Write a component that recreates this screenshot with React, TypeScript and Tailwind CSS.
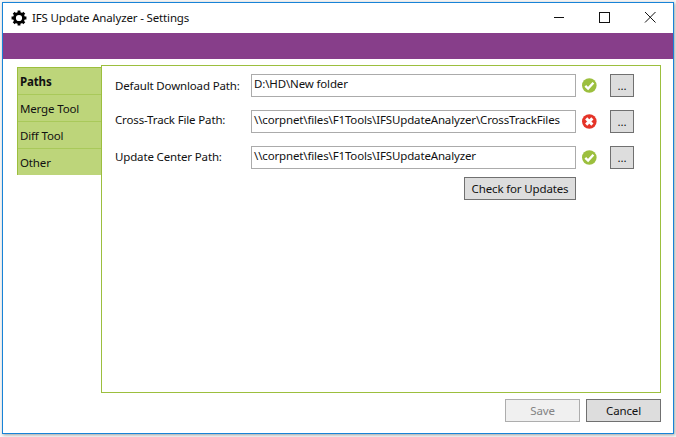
const font = "font-['Noto_Sans','Open_Sans',sans-serif] text-[11.5px] tracking-[-0.15px]";

function Gear() {
  return (
    <svg width="16" height="16" viewBox="0 0 17 17" className="shrink-0">
      <circle cx="8.5" cy="8.5" r="4.8" fill="none" stroke="#000" strokeWidth="3" />
      <path
        d="M8.5 0.6V3.8M8.5 13.2V16.4M0.6 8.5H3.8M13.2 8.5H16.4M2.9 2.9L5.2 5.2M11.8 11.8L14.1 14.1M2.9 14.1L5.2 11.8M11.8 5.2L14.1 2.9"
        stroke="#000"
        strokeWidth="3"
      />
    </svg>
  );
}

function Ok() {
  return (
    <svg width="15" height="15" viewBox="0 0 15 15">
      <circle cx="7.3" cy="7.5" r="7.3" fill="#9cbf3e" />
      <path d="M3.3 7.8L6.1 10.5L11.4 4.7" fill="none" stroke="#fff" strokeWidth="2.4" />
    </svg>
  );
}

function Bad() {
  return (
    <svg width="15" height="15" viewBox="0 0 15 15">
      <circle cx="7.3" cy="7.5" r="7.3" fill="#e53428" />
      <path d="M4.2 4.4L10.4 10.6M10.4 4.4L4.2 10.6" fill="none" stroke="#fff" strokeWidth="3" />
    </svg>
  );
}

function Row({
  label,
  value,
  status,
  labelClass,
}: {
  label: string;
  value: string;
  status: "ok" | "bad";
  labelClass: string;
}) {
  return (
    <div className="flex items-center h-[23px]">
      <span className={`w-[136px] text-[#111] whitespace-nowrap ${labelClass}`}>{label}</span>
      <div className="w-[325px] h-[23px] border border-[#ababab] bg-white flex items-center pl-[2px] pb-[3px] text-[#111] whitespace-nowrap overflow-hidden">
        {value}
      </div>
      <div className="ml-[6px] w-[15px] h-[15px] flex">{status === "ok" ? <Ok /> : <Bad />}</div>
      <button className="ml-[13px] w-[24px] h-[23px] bg-[#dddddd] border border-[#707070] text-[#111] leading-none">
        ...
      </button>
    </div>
  );
}

export default function App() {
  return (
    <div className={`w-[676px] h-[437px] bg-[#f7f7f7] overflow-hidden pl-[2px] pt-[2px] ${font}`}>
      <div className="w-[672px] h-[432px] border border-[#1883d7] bg-white flex flex-col shadow-[1px_1px_3px_rgba(0,0,0,0.35)]">
        <div className="h-[30px] flex items-center pl-[8px] shrink-0">
          <Gear />
          <span className="ml-[5px] text-[#111] whitespace-nowrap">IFS Update Analyzer - Settings</span>
          <div className="ml-auto flex items-center">
            <svg width="46" height="30" viewBox="0 0 46 30">
              <path d="M19 14.5H29" stroke="#111" />
            </svg>
            <svg width="46" height="30" viewBox="0 0 46 30">
              <rect x="18.5" y="9.5" width="10" height="10" fill="none" stroke="#111" />
            </svg>
            <svg width="46" height="30" viewBox="0 0 46 30">
              <path d="M18 9L28.5 19.5M28.5 9L18 19.5" stroke="#111" fill="none" />
            </svg>
          </div>
        </div>
        <div className="h-[26px] bg-[#873e8a] shrink-0" />
        <div className="flex-1 flex flex-col pl-[14px] pr-[12px] pt-[6px]">
          <div className="flex h-[328px]">
            <div className="w-[84px] mt-[2px] h-[108px] bg-[#bdd57a] border-l border-t border-[#9cbf3e] shrink-0 text-[#111]">
              <div className="h-[27px] flex items-center pl-[2px] pt-[2px] font-bold border-b border-[#a9c95a]">Paths</div>
              <div className="h-[27px] flex items-center pl-[2px] pt-[2px] border-b border-[#a9c95a]">Merge Tool</div>
              <div className="h-[27px] flex items-center pl-[2px] pt-[2px] border-b border-[#a9c95a]">Diff Tool</div>
              <div className="h-[26px] flex items-center pl-[2px] pt-[2px]">Other</div>
            </div>
            <div className="flex-1 border border-[#9cbf3e] pl-[13px] pt-[8px]">
              <div className="flex flex-col gap-[13px]">
                <Row label="Default Download Path:" value="D:\HD\New folder" status="ok" labelClass="" />
                <Row
                  label="Cross-Track File Path:"
                  value="\\corpnet\files\F1Tools\IFSUpdateAnalyzer\CrossTrackFiles"
                  status="bad"
                  labelClass="pb-[3px]"
                />
                <Row
                  label="Update Center Path:"
                  value="\\corpnet\files\F1Tools\IFSUpdateAnalyzer"
                  status="ok"
                  labelClass="pb-[1px]"
                />
              </div>
              <div className="flex justify-end w-[461px] mt-[8px]">
                <button className="w-[112px] h-[23px] bg-[#dddddd] border border-[#707070] text-[#111]">
                  Check for Updates
                </button>
              </div>
            </div>
          </div>
          <div className="flex justify-end gap-[6px] mt-[6px]">
            <button disabled className="w-[75px] h-[23px] bg-[#f0f0f0] border border-[#adadad] text-[#838383]">
              Save
            </button>
            <button className="w-[75px] h-[23px] bg-[#dddddd] border border-[#707070] text-[#111]">Cancel</button>
          </div>
        </div>
      </div>
    </div>
  );
}
